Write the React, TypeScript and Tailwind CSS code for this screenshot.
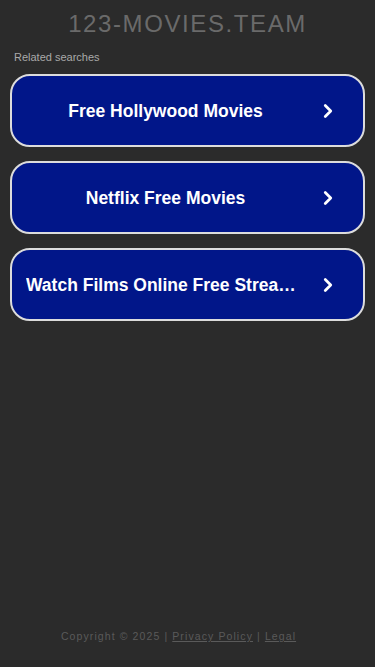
import { ChevronRight } from 'lucide-react';

const searches = [
    'Free Hollywood Movies',
    'Netflix Free Movies',
    'Watch Films Online Free Streaming',
];

export default function App() {
    return (
        <div className="min-h-[667px] bg-[#2b2b2b] flex flex-col font-['Liberation_Sans',Arial,sans-serif]">
            <h1 className="pt-[9px] text-center text-[24px] leading-[30px] tracking-[1.6px] text-[#6a6a6a]">
                123-MOVIES.TEAM
            </h1>
            <p className="mt-[11px] px-[14px] text-[11px] leading-[14px] text-[#a9a9a9]">Related searches</p>

            <div className="mt-[10px] px-[10px] flex flex-col gap-[14px]">
                {searches.map(s => (
                    <a
                        key={s}
                        href="#"
                        className="h-[73px] flex items-center gap-3 pl-[14px] pr-[24px] rounded-[20px] border-2 border-[#dcdcdc] bg-[#011689] text-white"
                    >
                        <span className="flex-1 min-w-0 text-center truncate font-bold text-[17.5px] leading-[20px]">{s}</span>
                        <ChevronRight size={22} strokeWidth={3} />
                    </a>
                ))}
            </div>

            <footer className="mt-auto pb-[22px] pr-[18px] text-center text-[10.5px] tracking-[1.1px] text-[#5a5a5a]">
                Copyright © 2025 | <a href="#" className="underline">Privacy Policy</a> | <a href="#" className="underline">Legal</a>
            </footer>
        </div>
    );
}
